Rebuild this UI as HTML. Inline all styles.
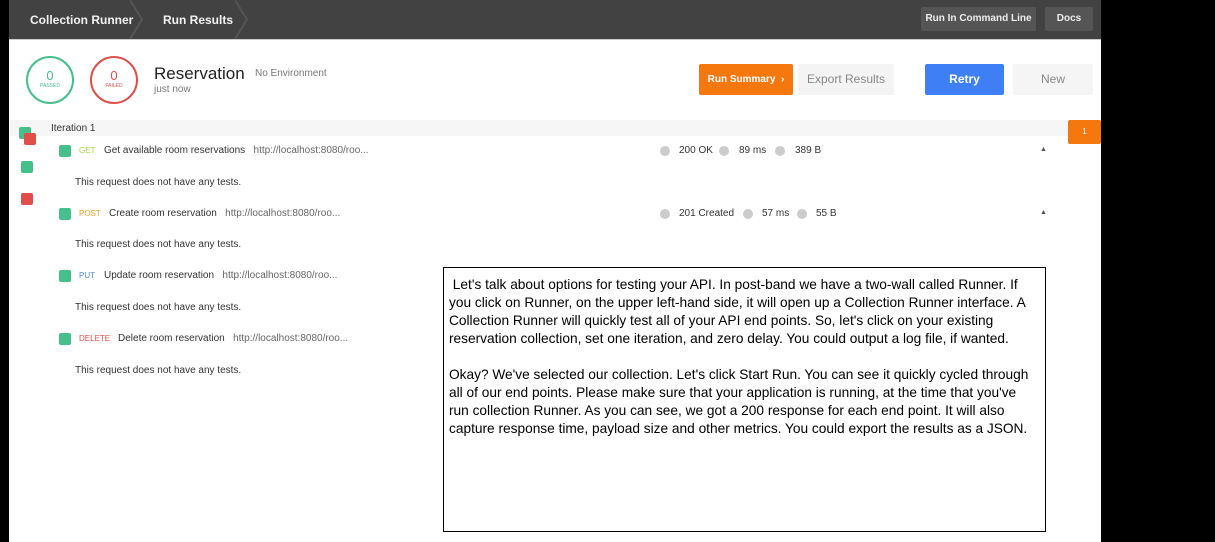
<!DOCTYPE html><html><head><style>
body{margin:0;width:1215px;height:542px;background:#000;position:relative;overflow:hidden;font-family:"Liberation Sans",sans-serif}
.a{position:absolute}
.app{left:9px;top:0;width:1092px;height:542px;background:#fff}
.hdr{left:9px;top:0;width:1092px;height:39px;background:#424242;border-bottom:1px solid #ccc}
.t{color:#f2f2f2;font-size:12px;font-weight:bold}
.btn{font-size:11px;text-align:center;border-radius:2px}
.ci{border-radius:50%;width:44px;height:44px;text-align:center}
.sm{font-size:10px;color:#333}
.dot{width:10px;height:10px;border-radius:50%;background:#ccc}
.sq{width:12px;height:12px;border-radius:2px}
.box{left:443px;top:267px;width:603px;height:265px;border:1px solid #000;background:#fff;font-size:13.7px;line-height:18px;color:#000;padding:8px 0 0 5px;box-sizing:border-box;white-space:nowrap}
</style></head><body>
<div class="a app"></div>
<div class="a hdr"></div>
<svg class="a" style="left:130px;top:0" width="130" height="39"><polyline points="0,0 12,19.5 0,39" fill="none" stroke="#555" stroke-width="2"/><polyline points="105,0 117,19.5 105,39" fill="none" stroke="#555" stroke-width="2"/></svg>
<div class="a t" style="left:30px;top:13px">Collection Runner</div>
<div class="a t" style="left:163px;top:13px">Run Results</div>
<div class="a btn" style="left:921px;top:7px;width:115px;height:24px;line-height:24px;background:#555;color:#eee;font-size:10px;font-weight:bold">Run In Command Line</div>
<div class="a btn" style="left:1045px;top:7px;width:48px;height:24px;line-height:24px;background:#555;color:#eee;font-size:10px;font-weight:bold">Docs</div>
<div class="a ci" style="left:26px;top:56px;border:2px solid #45c08a;color:#45c08a"><div style="font-size:13px;margin-top:10px">0</div><div style="font-size:5px">PASSED</div></div>
<div class="a ci" style="left:90px;top:56px;border:2px solid #e0504a;color:#e0504a"><div style="font-size:13px;margin-top:10px">0</div><div style="font-size:5px">FAILED</div></div>
<div class="a" style="left:154px;top:64px;font-size:17px;color:#222">Reservation</div>
<div class="a" style="left:255px;top:68px;font-size:10px;color:#777">No Environment</div>
<div class="a" style="left:154px;top:84px;font-size:10px;color:#777">just now</div>
<div class="a btn" style="left:699px;top:64px;width:94px;height:31px;line-height:31px;background:#f5780f;color:#fff;font-weight:bold;font-size:10px">Run Summary &nbsp;›</div>
<div class="a btn" style="left:798px;top:64px;width:96px;height:31px;line-height:31px;background:#f4f4f4;color:#888;font-size:12px">Export Results</div>
<div class="a btn" style="left:925px;top:64px;width:79px;height:31px;line-height:31px;background:#3f7ff5;color:#fff;font-size:12px;font-weight:bold">Retry</div>
<div class="a btn" style="left:1013px;top:64px;width:80px;height:31px;line-height:31px;background:#f5f5f5;color:#888;font-size:12px">New</div>
<div class="a" style="left:10px;top:120px;width:1091px;height:16px;background:#f6f6f6"></div>
<div class="a sm" style="left:51px;top:123px">Iteration 1</div>
<div class="a btn" style="left:1068px;top:120px;width:33px;height:24px;line-height:24px;background:#f5780f;color:#fff;font-size:8px">1</div>
<div class="a sq" style="left:19px;top:127px;background:#45c08a"></div>
<div class="a sq" style="left:24px;top:133px;background:#e0504a"></div>
<div class="a sq" style="left:21px;top:161px;background:#45c08a"></div>
<div class="a sq" style="left:21px;top:193px;background:#e0504a"></div>

<div class="a sq" style="left:59px;top:145px;background:#45c08a"></div>
<div class="a sm" style="left:79px;top:146px;color:#a3d93a;font-size:8px">GET</div>
<div class="a sm" style="left:104px;top:145px">Get available room reservations &nbsp; <span style="color:#666">http://localhost:8080/roo...</span></div>
<div class="a sm" style="left:75px;top:177px">This request does not have any tests.</div>
<div class="a dot" style="left:660px;top:146px"></div><div class="a sm" style="left:679px;top:145px">200 OK</div>
<div class="a dot" style="left:719px;top:146px"></div><div class="a sm" style="left:739px;top:145px">89 ms</div>
<div class="a dot" style="left:775px;top:146px"></div><div class="a sm" style="left:795px;top:145px">389 B</div>
<div class="a" style="left:1040px;top:146px;font-size:7px;color:#555">▲</div>

<div class="a sq" style="left:59px;top:208px;background:#45c08a"></div>
<div class="a sm" style="left:79px;top:209px;color:#f0a020;font-size:8px">POST</div>
<div class="a sm" style="left:109px;top:208px">Create room reservation &nbsp; <span style="color:#666">http://localhost:8080/roo...</span></div>
<div class="a sm" style="left:75px;top:239px">This request does not have any tests.</div>
<div class="a dot" style="left:660px;top:209px"></div><div class="a sm" style="left:679px;top:208px">201 Created</div>
<div class="a dot" style="left:743px;top:209px"></div><div class="a sm" style="left:762px;top:208px">57 ms</div>
<div class="a dot" style="left:797px;top:209px"></div><div class="a sm" style="left:816px;top:208px">55 B</div>
<div class="a" style="left:1040px;top:209px;font-size:7px;color:#555">▲</div>

<div class="a sq" style="left:59px;top:270px;background:#45c08a"></div>
<div class="a sm" style="left:79px;top:271px;color:#4a90e2;font-size:8px">PUT</div>
<div class="a sm" style="left:104px;top:270px">Update room reservation &nbsp; <span style="color:#666">http://localhost:8080/roo...</span></div>
<div class="a sm" style="left:75px;top:302px">This request does not have any tests.</div>

<div class="a sq" style="left:59px;top:333px;background:#45c08a"></div>
<div class="a sm" style="left:79px;top:334px;color:#e0504a;font-size:8px">DELETE</div>
<div class="a sm" style="left:118px;top:333px">Delete room reservation &nbsp; <span style="color:#666">http://localhost:8080/roo...</span></div>
<div class="a sm" style="left:75px;top:365px">This request does not have any tests.</div>

<div class="a box">&nbsp;Let's talk about options for testing your API. In post-band we have a two-wall called Runner. If<br>you click on Runner, on the upper left-hand side, it will open up a Collection Runner interface. A<br>Collection Runner will quickly test all of your API end points. So, let's click on your existing<br>reservation collection, set one iteration, and zero delay. You could output a log file, if wanted.<br><br>Okay? We've selected our collection. Let's click Start Run. You can see it quickly cycled through<br>all of our end points. Please make sure that your application is running, at the time that you've<br>run collection Runner. As you can see, we got a 200 response for each end point. It will also<br>capture response time, payload size and other metrics. You could export the results as a JSON.</div>
</body></html>
